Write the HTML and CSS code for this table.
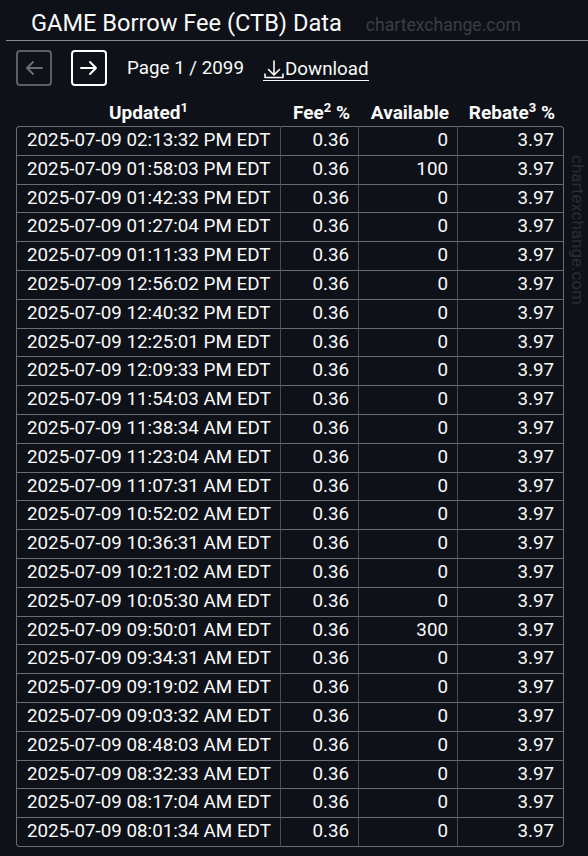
FILE: index.html
```html
<!DOCTYPE html>
<html lang="en">
<head>
    <meta charset="UTF-8">
    <meta name="viewport" content="width=device-width, initial-scale=1.0">
    <title>GAME Borrow Fee (CTB) Data</title>
    <link rel="stylesheet" href="styles.css">
</head>
<body>
    <div class="page">
        <div class="title-bar">
            <h1>GAME Borrow Fee (CTB) Data</h1>
            <span class="brand">chartexchange.com</span>
        </div>

        <div class="pager">
            <button class="nav-btn disabled" aria-label="Previous page">
                <svg width="22" height="22" viewBox="0 0 22 22"><path d="M19 11H4M10 5l-6 6 6 6" fill="none" stroke="currentColor" stroke-width="2" stroke-linecap="round" stroke-linejoin="round"/></svg>
            </button>
            <button class="nav-btn" aria-label="Next page">
                <svg width="22" height="22" viewBox="0 0 22 22"><path d="M3 11h15M12 5l6 6-6 6" fill="none" stroke="currentColor" stroke-width="2" stroke-linecap="round" stroke-linejoin="round"/></svg>
            </button>
            <span class="page-info">Page 1 / 2099</span>
            <a class="download" href="#">
                <svg width="22" height="22" viewBox="0 0 22 22"><path d="M11 3v14M5.5 11.5L11 17l5.5-5.5M2 16v3.5h18V16" fill="none" stroke="currentColor" stroke-width="1.6" stroke-linecap="round" stroke-linejoin="round"/></svg>Download</a>
        </div>

        <div class="table-wrap">
            <table class="data">
                <colgroup>
                    <col class="c-date">
                    <col class="c-fee">
                    <col class="c-avail">
                    <col class="c-rebate">
                </colgroup>
                <thead>
                    <tr>
                        <th class="col-date">Updated<sup>1</sup></th>
                        <th>Fee<sup>2</sup> %</th>
                        <th>Available</th>
                        <th>Rebate<sup>3</sup> %</th>
                    </tr>
                </thead>
                <tbody>
                    <tr><td>2025-07-09 02:13:32 PM EDT</td><td>0.36</td><td>0</td><td>3.97</td></tr>
                    <tr><td>2025-07-09 01:58:03 PM EDT</td><td>0.36</td><td>100</td><td>3.97</td></tr>
                    <tr><td>2025-07-09 01:42:33 PM EDT</td><td>0.36</td><td>0</td><td>3.97</td></tr>
                    <tr><td>2025-07-09 01:27:04 PM EDT</td><td>0.36</td><td>0</td><td>3.97</td></tr>
                    <tr><td>2025-07-09 01:11:33 PM EDT</td><td>0.36</td><td>0</td><td>3.97</td></tr>
                    <tr><td>2025-07-09 12:56:02 PM EDT</td><td>0.36</td><td>0</td><td>3.97</td></tr>
                    <tr><td>2025-07-09 12:40:32 PM EDT</td><td>0.36</td><td>0</td><td>3.97</td></tr>
                    <tr><td>2025-07-09 12:25:01 PM EDT</td><td>0.36</td><td>0</td><td>3.97</td></tr>
                    <tr><td>2025-07-09 12:09:33 PM EDT</td><td>0.36</td><td>0</td><td>3.97</td></tr>
                    <tr><td>2025-07-09 11:54:03 AM EDT</td><td>0.36</td><td>0</td><td>3.97</td></tr>
                    <tr><td>2025-07-09 11:38:34 AM EDT</td><td>0.36</td><td>0</td><td>3.97</td></tr>
                    <tr><td>2025-07-09 11:23:04 AM EDT</td><td>0.36</td><td>0</td><td>3.97</td></tr>
                    <tr><td>2025-07-09 11:07:31 AM EDT</td><td>0.36</td><td>0</td><td>3.97</td></tr>
                    <tr><td>2025-07-09 10:52:02 AM EDT</td><td>0.36</td><td>0</td><td>3.97</td></tr>
                    <tr><td>2025-07-09 10:36:31 AM EDT</td><td>0.36</td><td>0</td><td>3.97</td></tr>
                    <tr><td>2025-07-09 10:21:02 AM EDT</td><td>0.36</td><td>0</td><td>3.97</td></tr>
                    <tr><td>2025-07-09 10:05:30 AM EDT</td><td>0.36</td><td>0</td><td>3.97</td></tr>
                    <tr><td>2025-07-09 09:50:01 AM EDT</td><td>0.36</td><td>300</td><td>3.97</td></tr>
                    <tr><td>2025-07-09 09:34:31 AM EDT</td><td>0.36</td><td>0</td><td>3.97</td></tr>
                    <tr><td>2025-07-09 09:19:02 AM EDT</td><td>0.36</td><td>0</td><td>3.97</td></tr>
                    <tr><td>2025-07-09 09:03:32 AM EDT</td><td>0.36</td><td>0</td><td>3.97</td></tr>
                    <tr><td>2025-07-09 08:48:03 AM EDT</td><td>0.36</td><td>0</td><td>3.97</td></tr>
                    <tr><td>2025-07-09 08:32:33 AM EDT</td><td>0.36</td><td>0</td><td>3.97</td></tr>
                    <tr><td>2025-07-09 08:17:04 AM EDT</td><td>0.36</td><td>0</td><td>3.97</td></tr>
                    <tr><td>2025-07-09 08:01:34 AM EDT</td><td>0.36</td><td>0</td><td>3.97</td></tr>
                </tbody>
            </table>
            <span class="side-mark">chartexchange.com</span>
        </div>
    </div>
</body>
</html>
```

FILE: styles.css
```css
* {
    margin: 0;
    padding: 0;
    box-sizing: border-box;
}

body {
    font-family: Roboto, 'Liberation Sans', sans-serif;
    background: #0e1117;
    color: #fafafa;
    overflow: hidden;
}

.page {
    padding-top: 10px;
}

.title-bar {
    display: flex;
    align-items: baseline;
    margin-left: 6px;
    padding: 0 0 3px 25px;
    border-bottom: 1px solid #8a8a8a;
}

h1 {
    font-size: 23.6px;
    font-weight: 400;
    line-height: 27px;
}

.brand {
    margin-left: 24px;
    font-size: 17.6px;
    color: #3b3e44;
}

.pager {
    display: flex;
    align-items: center;
    height: 36px;
    margin: 9px 0 0 16px;
}

.nav-btn {
    display: flex;
    align-items: center;
    justify-content: center;
    width: 36px;
    height: 36px;
    margin-right: 19px;
    background: transparent;
    color: #fff;
    border: 2px solid #fff;
    border-radius: 4px;
}

.nav-btn.disabled {
    color: #6b6d72;
    border-color: #5c5e63;
}

.page-info {
    margin-left: 1px;
    font-size: 18.8px;
}

.download {
    display: flex;
    align-items: center;
    margin-left: 19px;
    padding-top: 2px;
    font-size: 18.8px;
    color: #fafafa;
    text-decoration: none;
    border-bottom: 1.5px solid #fafafa;
    line-height: 22px;
}

.table-wrap {
    position: relative;
    margin: 9px 0 0 16px;
    width: 548px;
}

.data {
    width: 548px;
    table-layout: fixed;
    border-collapse: separate;
    border-spacing: 0;
}

.c-date { width: 265px; }
.c-fee { width: 78px; }
.c-avail { width: 99px; }
.c-rebate { width: 106px; }

.data th {
    font-size: 19px;
    font-weight: 700;
    text-align: right;
    padding: 0 9px 2px 0;
    height: 31px;
    line-height: 22px;
    vertical-align: bottom;
    white-space: nowrap;
}

.data th.col-date {
    text-align: center;
    padding-right: 0;
}

.data sup {
    font-size: 13px;
    vertical-align: 7px;
    line-height: 0;
}

.data td {
    font-size: 18.8px;
    padding: 0 9px 0 10px;
    text-align: right;
    white-space: nowrap;
    border-right: 1px solid #4a4c52;
    border-bottom: 1px solid #6a6c70;
    line-height: 27.8px;
}

.data td:first-child {
    text-align: left;
    border-left: 1px solid #6a6c70;
}

.data td:last-child {
    border-right: 1px solid #6a6c70;
}

.data tbody tr:first-child td {
    border-top: 1px solid #6a6c70;
}

.data tbody tr:first-child td:first-child {
    border-top-left-radius: 4px;
}

.data tbody tr:first-child td:last-child {
    border-top-right-radius: 4px;
}

.data tbody tr:last-child td:first-child {
    border-bottom-left-radius: 4px;
}

.data tbody tr:last-child td:last-child {
    border-bottom-right-radius: 4px;
}

.side-mark {
    position: absolute;
    left: 552px;
    top: 60px;
    writing-mode: vertical-rl;
    font-size: 17px;
    color: #2a2d33;
}
```
